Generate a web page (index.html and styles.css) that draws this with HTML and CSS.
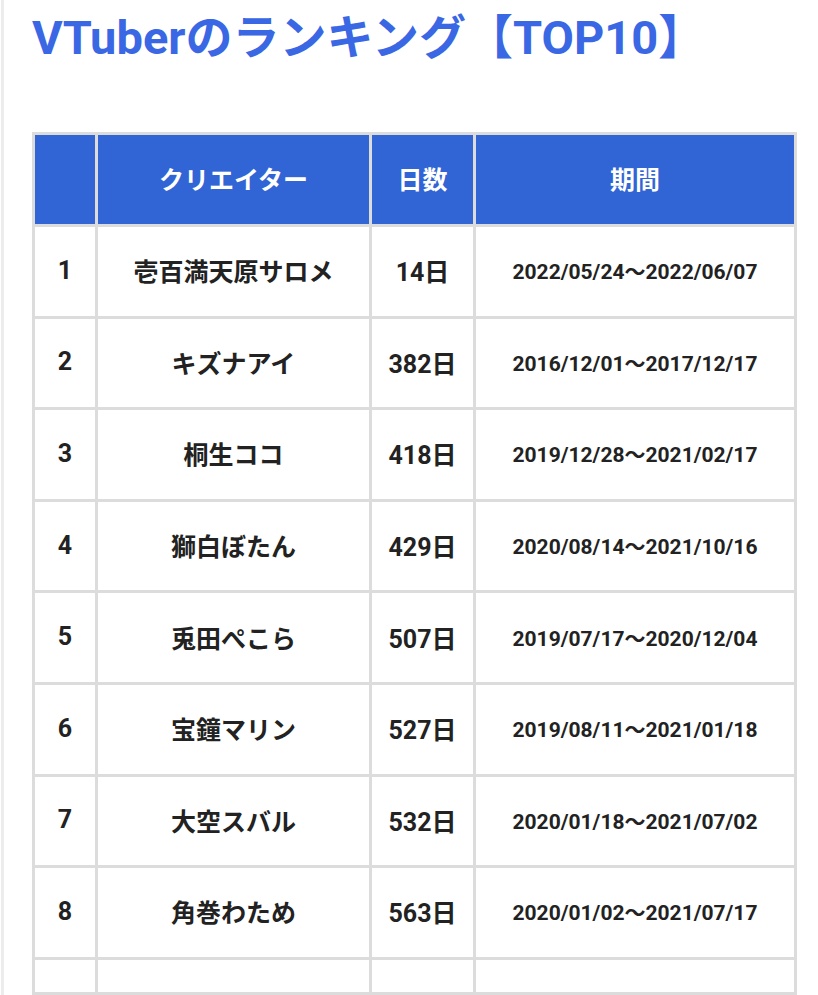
FILE: index.html
```html
<!DOCTYPE html>
<html lang="ja">
<head>
<meta charset="utf-8">
<link rel="stylesheet" href="styles.css">
</head>
<body>
<div class="page">
  <h1 class="title">VTuberのランキング【TOP10】</h1>
  <div class="table-wrap">
    <table class="rank">
      <colgroup>
        <col class="c-rank"><col class="c-name"><col class="c-days"><col class="c-period">
      </colgroup>
      <thead>
        <tr><th></th><th>クリエイター</th><th>日数</th><th>期間</th></tr>
      </thead>
      <tbody>
        <tr><td>1</td><td class="name">壱百満天原サロメ</td><td class="days">14日</td><td class="period">2022/05/24〜2022/06/07</td></tr>
        <tr><td>2</td><td class="name">キズナアイ</td><td class="days">382日</td><td class="period">2016/12/01〜2017/12/17</td></tr>
        <tr><td>3</td><td class="name">桐生ココ</td><td class="days">418日</td><td class="period">2019/12/28〜2021/02/17</td></tr>
        <tr><td>4</td><td class="name">獅白ぼたん</td><td class="days">429日</td><td class="period">2020/08/14〜2021/10/16</td></tr>
        <tr><td>5</td><td class="name">兎田ぺこら</td><td class="days">507日</td><td class="period">2019/07/17〜2020/12/04</td></tr>
        <tr><td>6</td><td class="name">宝鐘マリン</td><td class="days">527日</td><td class="period">2019/08/11〜2021/01/18</td></tr>
        <tr><td>7</td><td class="name">大空スバル</td><td class="days">532日</td><td class="period">2020/01/18〜2021/07/02</td></tr>
        <tr><td>8</td><td class="name">角巻わため</td><td class="days">563日</td><td class="period">2020/01/02〜2021/07/17</td></tr>
        <tr><td>9</td><td class="name">湊あくあ</td><td class="days">570日</td><td class="period">2019/12/01〜2021/06/24</td></tr>
      </tbody>
    </table>
  </div>
</div>
</body>
</html>
```
FILE: styles.css
```css
html, body {
  margin: 0;
  padding: 0;
  background: #ffffff;
  height: 100%;
  overflow: hidden;
}
.page {
  box-sizing: border-box;
  height: 995px;
  margin-left: 1px;
  border-left: 3px solid #ececec;
  padding: 8px 0 0 28px;
  font-family: "Roboto", "Noto Sans CJK JP", sans-serif;
}
.title {
  margin: 0;
  font-family: "Roboto", "Noto Sans CJK JP", sans-serif;
  font-size: 47px;
  line-height: 60px;
  font-weight: 700;
  color: #3a67e3;
  letter-spacing: 0;
}
.table-wrap {
  margin-top: 64px;
  width: 765px;
  height: 863px;
  box-sizing: border-box;
  overflow: hidden;
  border-bottom: 3px solid #dcdcdc;
}
.rank {
  table-layout: fixed;
  width: 765px;
  border-collapse: separate;
  border-spacing: 0;
  border-top: 3px solid #dcdcdc;
  border-left: 3px solid #dcdcdc;
}
.c-rank { width: 63px; }
.c-name { width: 274px; }
.c-days { width: 104px; }
.c-period { width: 321px; }
.rank th, .rank td {
  box-sizing: border-box;
  border-right: 3px solid #dcdcdc;
  border-bottom: 3px solid #dcdcdc;
  text-align: center;
  vertical-align: middle;
  padding: 0;
}
.rank th {
  height: 92px;
  background: #3164d4;
  color: #ffffff;
  font-size: 25px;
  font-weight: 700;
  padding-bottom: 4px;
}
.rank td {
  height: 91.6px;
  color: #222222;
  font-size: 25px;
  font-weight: 700;
  padding-bottom: 2px;
}
.rank td.period {
  font-size: 21px;
}
```
